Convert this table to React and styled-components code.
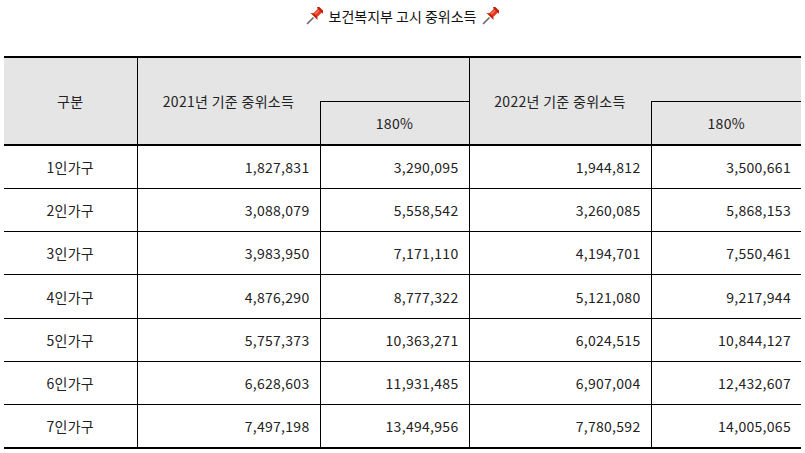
import React from "react";
import styled, { createGlobalStyle } from "styled-components";

const Global = createGlobalStyle`
  html, body { margin: 0; padding: 0; background: #fff; }
  body { font-family: "Noto Sans CJK KR", "Noto Sans", sans-serif; color: #222; }
`;

const Page = styled.div`
  width: 805px;
  padding: 0 4px;
  box-sizing: border-box;
`;

const Title = styled.h3`
  margin: 0;
  height: 56px;
  padding-top: 6px;
  box-sizing: border-box;
  display: flex;
  justify-content: center;
  align-items: flex-start;
  gap: 6px;
  font-size: 14px;
  font-weight: 400;
  line-height: 20px;
  color: #111;
`;

const PinWrap = styled.span`
  display: inline-flex;
  width: 17px;
  height: 20px;
  align-items: center;
`;

const Pin = () => (
  <PinWrap>
    <svg width="17" height="18" viewBox="0 0 17 18">
      <line x1="1.5" y1="16.5" x2="7" y2="11" stroke="#6b6b6b" strokeWidth="1.7" strokeLinecap="round" />
      <g transform="rotate(45 10.5 7)">
        <rect x="7.8" y="1.2" width="5.4" height="8.5" rx="1" fill="#e8331c" />
        <rect x="6.2" y="0" width="8.6" height="2.4" rx="1" fill="#c7200d" />
        <path d="M5.5 10.5 L15.5 10.5 L13.2 8.5 L7.8 8.5 Z" fill="#c7200d" />
        <rect x="9" y="2.6" width="1.4" height="5.6" fill="#ff7a5c" />
      </g>
    </svg>
  </PinWrap>
);

const Table = styled.table`
  width: 797px;
  border-collapse: collapse;
  table-layout: fixed;
  border-top: 2px solid #000;
  border-bottom: 2px solid #000;
  font-size: 14px;
  letter-spacing: 0.3px;
  color: #222;
`;

const HeadRow = styled.tr`
  background: #e5e5e5;
  height: 44px;
`;

const Th = styled.th`
  font-weight: 400;
  padding: 0;
  text-align: center;
  vertical-align: middle;
  border-left: ${(p) => (p.$noLeft ? "none" : "1px solid #000")};
  border-top: ${(p) => (p.$boxed ? "1px solid #000" : "none")};
  border-bottom: 2px solid #000;
`;

const Spacer = styled.th`
  padding: 0;
  border: none;
`;

const Row = styled.tr`
  height: 43.3px;
  border-top: 1px solid #000;
  &:first-child { border-top: none; }
`;

const Td = styled.td`
  padding: 0 10px;
  text-align: ${(p) => (p.$center ? "center" : "right")};
  border-left: ${(p) => (p.$first ? "none" : "1px solid #000")};
  white-space: nowrap;
`;

const rows = [
  ["1인가구", "1,827,831", "3,290,095", "1,944,812", "3,500,661"],
  ["2인가구", "3,088,079", "5,558,542", "3,260,085", "5,868,153"],
  ["3인가구", "3,983,950", "7,171,110", "4,194,701", "7,550,461"],
  ["4인가구", "4,876,290", "8,777,322", "5,121,080", "9,217,944"],
  ["5인가구", "5,757,373", "10,363,271", "6,024,515", "10,844,127"],
  ["6인가구", "6,628,603", "11,931,485", "6,907,004", "12,432,607"],
  ["7인가구", "7,497,198", "13,494,956", "7,780,592", "14,005,065"],
];

export default function App() {
  return (
    <Page>
      <Global />
      <Title>
        <Pin />
        보건복지부 고시 중위소득
        <Pin />
      </Title>
      <Table>
        <colgroup>
          <col style={{ width: 133 }} />
          <col style={{ width: 183 }} />
          <col style={{ width: 149 }} />
          <col style={{ width: 182 }} />
          <col style={{ width: 150 }} />
        </colgroup>
        <thead>
          <HeadRow>
            <Th rowSpan={2} $noLeft>구분</Th>
            <Th rowSpan={2}>2021년 기준 중위소득</Th>
            <Spacer />
            <Th rowSpan={2}>2022년 기준 중위소득</Th>
            <Spacer />
          </HeadRow>
          <HeadRow>
            <Th $boxed>180%</Th>
            <Th $boxed>180%</Th>
          </HeadRow>
        </thead>
        <tbody>
          {rows.map((r) => (
            <Row key={r[0]}>
              <Td $center $first>{r[0]}</Td>
              <Td>{r[1]}</Td>
              <Td>{r[2]}</Td>
              <Td>{r[3]}</Td>
              <Td>{r[4]}</Td>
            </Row>
          ))}
        </tbody>
      </Table>
    </Page>
  );
}
